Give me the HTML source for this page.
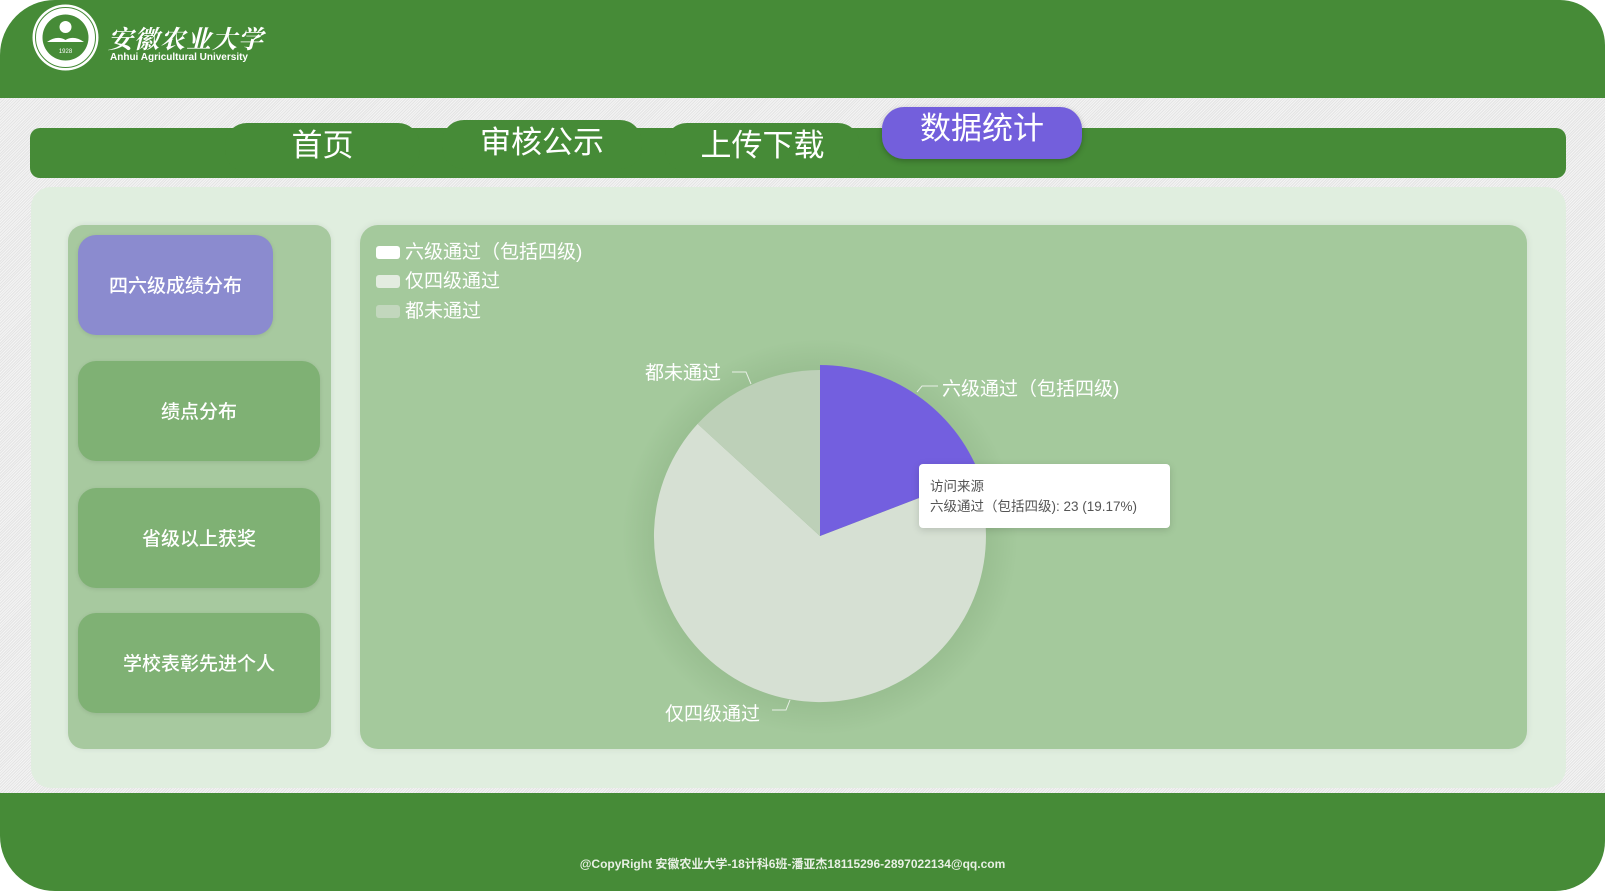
<!DOCTYPE html>
<html><head><meta charset="utf-8"><style>
*{margin:0;padding:0;box-sizing:border-box}
body{width:1605px;height:891px;overflow:hidden;position:relative;font-family:"Liberation Sans","Noto Sans CJK SC",sans-serif;background:#fff}
.bg{position:absolute;left:0;top:98px;width:1605px;height:695px;background:repeating-linear-gradient(135deg,#f4f4f4 0 1px,#e4e4e4 1px 2px)}
.header{position:absolute;left:0;top:0;width:1605px;height:98px;background:#468b37;border-top-left-radius:55px;border-top-right-radius:45px}
.footer{position:absolute;left:0;top:793px;width:1605px;height:98px;background:#468b37;border-bottom-left-radius:55px;border-bottom-right-radius:50px}
.footer p{position:absolute;left:-10px;width:100%;top:62px;text-align:center;color:#e8f0e4;font-size:12px;font-weight:bold}
.nav{position:absolute;left:30px;top:128px;width:1536px;height:50px;background:#468b37;border-radius:10px}
.tab{position:absolute;height:49px;background:#468b37;border-radius:22px;color:#fff;font-size:31px;text-align:center}
.content{position:absolute;left:31px;top:187px;width:1535px;height:601px;background:#e0eedf;border-radius:20px}
.left{position:absolute;left:68px;top:225px;width:263px;height:524px;background:#a7c99f;border-radius:16px;box-shadow:0 0 6px rgba(0,0,0,.08)}
.btn{position:absolute;left:78px;width:242px;height:100px;background:#7fb174;border-radius:18px;color:#fff;font-size:19px;font-weight:500;text-align:center;line-height:100px;box-shadow:0 1px 4px rgba(0,0,0,.1);font-family:"Noto Sans CJK SC",sans-serif}
.chart{position:absolute;left:360px;top:225px;width:1167px;height:524px;background:#a4c99c;border-radius:18px;overflow:hidden;box-shadow:0 0 8px rgba(0,0,0,.08)}
.leg{position:absolute;left:16px;color:#fff;font-size:19px}
.leg i{display:inline-block;width:24px;height:13px;border-radius:3px;margin-right:5px;vertical-align:-1px}
.lbl{position:absolute;color:#fff;font-size:19px}
.tip{position:absolute;left:919px;top:464px;width:251px;height:64px;background:#fff;border-radius:4px;box-shadow:0 2px 8px rgba(0,0,0,.15);color:#555;font-size:13.5px;padding:13px 0 0 11px;line-height:20px}
</style></head><body>
<div class="bg"></div>
<div class="header">
<svg style="position:absolute;left:31px;top:3px" width="69" height="69" viewBox="0 0 69 69"><circle cx="34.5" cy="34.5" r="33" fill="#fff"/><circle cx="34.5" cy="34.5" r="30" fill="none" stroke="#468b37" stroke-width="1"/><circle cx="34.5" cy="34.5" r="23" fill="#468b37"/><circle cx="34.5" cy="24" r="6" fill="#fff"/><path d="M16 39 Q26 32 34.5 37 Q43 32 53 39 Z" fill="#fff"/><text x="34.5" y="50" fill="#fff" font-size="6" text-anchor="middle">1928</text></svg>
<div style="position:absolute;left:108px;top:20px;color:#fff;font-size:25px;font-family:'Noto Serif CJK SC',serif;font-style:italic;font-weight:bold;letter-spacing:1px">安徽农业大学</div>
<div style="position:absolute;left:110px;top:52px;color:#fff;font-size:10px;font-weight:bold">Anhui Agricultural University</div>
</div>
<div class="nav"></div>
<div class="tab" style="left:225px;top:123px;width:195px;line-height:46px">首页</div>
<div class="tab" style="left:442px;top:120px;width:200px;line-height:46px">审核公示</div>
<div class="tab" style="left:665px;top:123px;width:195px;line-height:46px">上传下载</div>
<div class="tab" style="left:882px;top:107px;width:200px;height:52px;background:#735fdc;line-height:44px;box-shadow:0 2px 6px rgba(0,0,0,.25)">数据统计</div>
<div class="content"></div>
<div class="left"></div>
<div class="btn" style="top:235px;width:195px;background:#8b8bcf">四六级成绩分布</div>
<div class="btn" style="top:361px">绩点分布</div>
<div class="btn" style="top:488px">省级以上获奖</div>
<div class="btn" style="top:613px">学校表彰先进个人</div>
<div class="chart">
<div style="position:absolute;left:260px;top:112px;width:400px;height:400px;border-radius:50%;background:radial-gradient(circle,rgba(70,110,60,.35) 35%,rgba(70,110,60,0) 70%)"></div>
<div class="leg" style="top:12px"><i style="background:#fff"></i>六级通过（包括四级)</div>
<div class="leg" style="top:41px"><i style="background:#e3ece0"></i>仅四级通过</div>
<div class="leg" style="top:71px"><i style="background:#c2d7bd"></i>都未通过</div>
</div>
<svg style="position:absolute;left:0;top:0" width="1605" height="891">
<path d="M820 536 L974.9 476.5 A166 166 0 1 1 697.6 423.9 Z" fill="#d6e0d3"/>
<path d="M820 536 L697.6 423.9 A166 166 0 0 1 820 370 Z" fill="#bdd0b8"/>
<path d="M820 536 L820 365 A171 171 0 0 1 979.6 474.7 Z" fill="#735fdf"/>
<path d="M917 392 L922 386 L938 386" fill="none" stroke="#e8efe6" stroke-width="1"/>
<path d="M732 372 L746 372 L751 384" fill="none" stroke="#e8efe6" stroke-width="1"/>
<path d="M772 710 L786 710 L790 700" fill="none" stroke="#e8efe6" stroke-width="1"/>
</svg>
<div class="lbl" style="left:942px;top:374px">六级通过（包括四级)</div>
<div class="lbl" style="left:645px;top:358px">都未通过</div>
<div class="lbl" style="left:665px;top:699px">仅四级通过</div>
<div class="tip">访问来源<br>六级通过（包括四级): 23 (19.17%)</div>
<div class="footer"><p>@CopyRight 安徽农业大学-18计科6班-潘亚杰18115296-2897022134@qq.com</p></div>
</body></html>
